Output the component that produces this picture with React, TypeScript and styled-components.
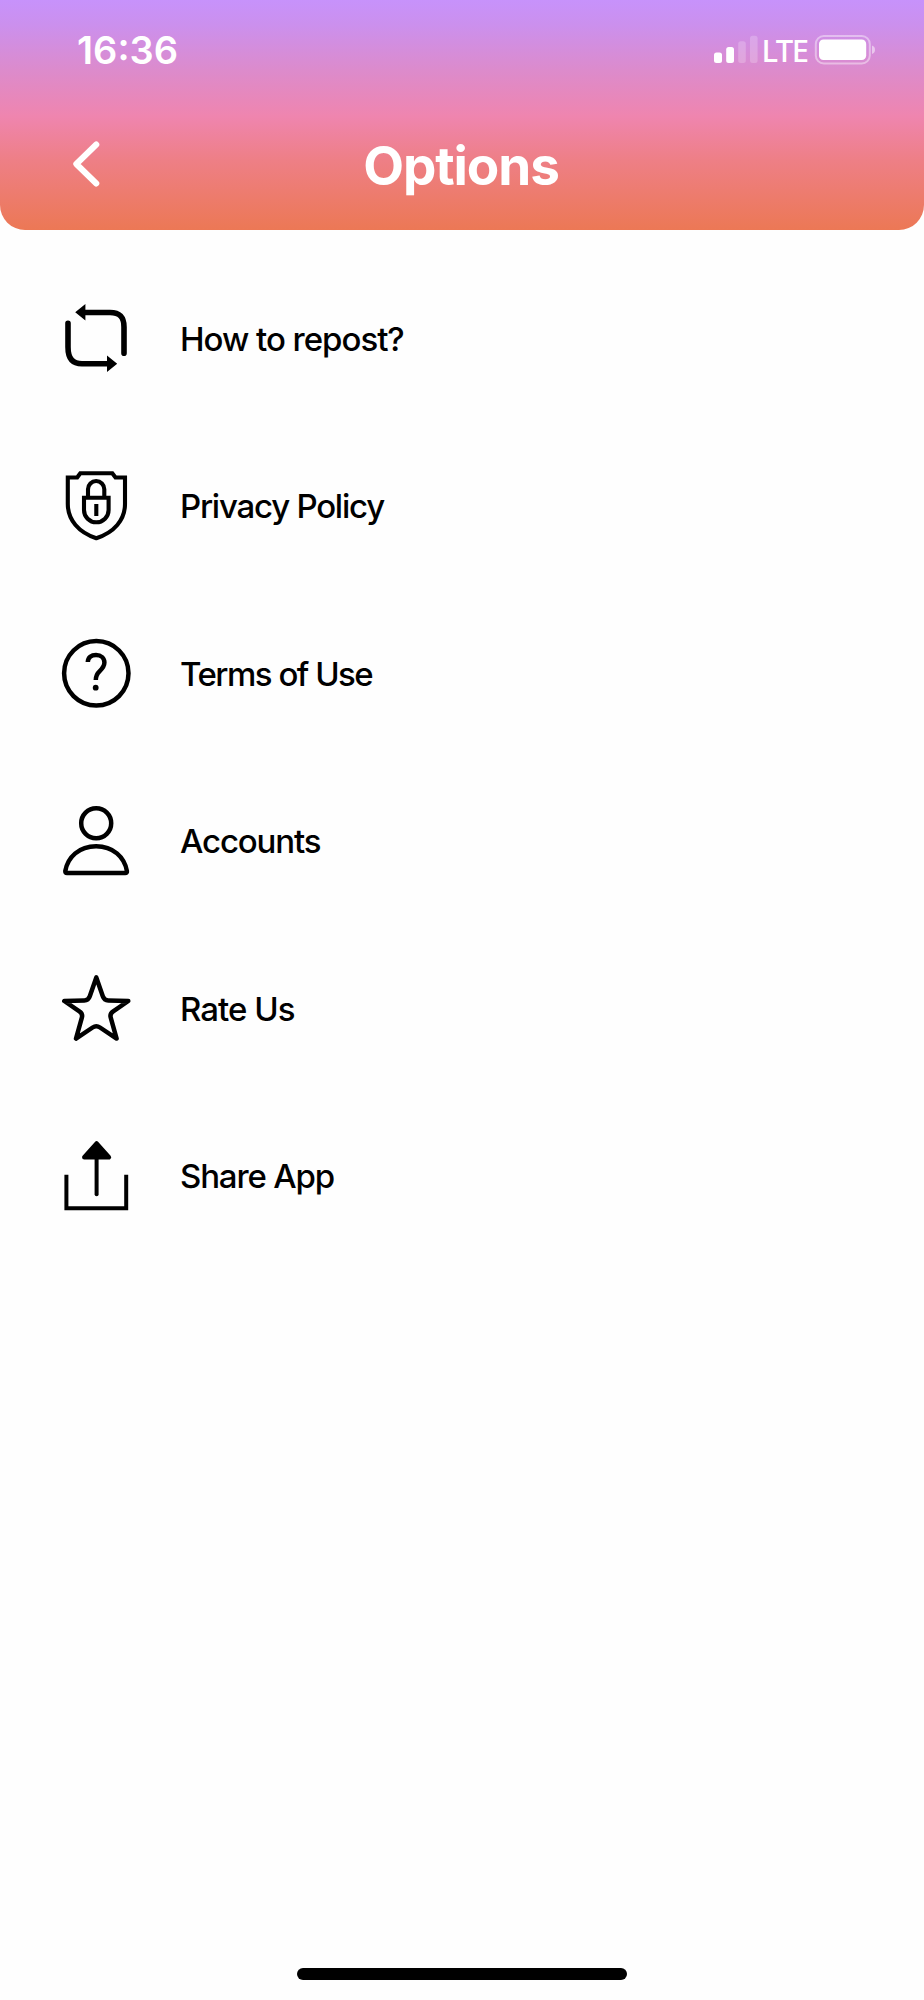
import React from 'react';
import styled, { createGlobalStyle } from 'styled-components';

const GlobalStyle = createGlobalStyle`
  * { box-sizing: border-box; }
  body { margin: 0; background: #fefefe; }
`;

const Screen = styled.main`
  display: flex;
  flex-direction: column;
  width: 924px;
  height: 2000px;
  background: #fefefe;
  color: #000;
  font-family: Inter, 'Liberation Sans', sans-serif;
`;

const Header = styled.header`
  display: flex;
  flex-direction: column;
  height: 230px;
  flex: none;
  color: #fff;
  border-radius: 0 0 25px 25px;
  background: linear-gradient(180deg, #c792fb 0, #cb90ee 24px, #dc8bcc 70px, #ef85af 116px, #ee7f86 160px, #ec7855 230px);
`;

const StatusBar = styled.div`
  display: flex;
  align-items: center;
  justify-content: space-between;
  height: 100px;
  padding: 0 49px 0 77px;
`;

const Clock = styled.time`
  font-size: 38px;
  font-weight: 600;
  line-height: 46px;
  letter-spacing: 0;
`;

const StatusIcons = styled.div`
  display: flex;
  align-items: center;
  height: 30px;

  svg { flex: none; }
`;

const Network = styled.span`
  flex: none;
  width: 55px;
  padding-left: 2.5px;
  font-family: 'Noto Sans', sans-serif;
  font-size: 31px;
  font-weight: 500;
  line-height: 36px;
  letter-spacing: -1.6px;
  white-space: nowrap;
`;

const TitleBar = styled.div`
  display: grid;
  grid-template-columns: 170px 1fr 170px;
  align-items: center;
  height: 130px;
  padding-bottom: 2px;
`;

const BackButton = styled.button`
  display: flex;
  width: 40px;
  height: 56px;
  margin-left: 66px;
  padding: 0;
  border: 0;
  background: none;
  color: inherit;
`;

const Title = styled.h1`
  margin: 0;
  padding: 3px 2px 0 0;
  text-align: center;
  font-size: 53px;
  font-weight: 700;
  line-height: 64px;
  letter-spacing: -1.1px;
`;

const Menu = styled.ul`
  display: flex;
  flex-direction: column;
  flex: 1;
  margin: 0;
  padding: 25px 0 0;
  list-style: none;
`;

const MenuItem = styled.li`
  display: flex;
  align-items: center;
  gap: 48px;
  height: 167.5px;
  padding-left: 60px;
`;

const Icon = styled.svg`
  display: block;
  flex: none;
  width: 72px;
  height: 72px;
  fill: none;
  stroke: currentColor;
  stroke-width: 4.5;
`;

const Label = styled.span<{ $tracking: number }>`
  padding-top: 0.4px;
  font-size: 33px;
  font-weight: 500;
  line-height: 40px;
  letter-spacing: ${(p) => p.$tracking}px;
  white-space: nowrap;
`;

const HomeIndicator = styled.div`
  flex: none;
  width: 330px;
  height: 12px;
  margin: 0 auto 20px;
  border-radius: 6px;
  background: #000;
`;

const RepostIcon = () => (
  <Icon viewBox="0 0 72 72">
    <g strokeWidth="5.6" strokeLinecap="round">
      <path d="M24 9.5H50C60 9.5 64 14 64 24V50.2" />
      <path d="M8 20.2V44C8 56 13 60.8 22 60.8H48" />
    </g>
    <path d="M15.2 9.3 25.4 1V17.4ZM57.2 60.8 47 52.6V69Z" fill="currentColor" stroke="none" />
  </Icon>
);

const ShieldIcon = () => (
  <Icon viewBox="0 0 72 72">
    <g strokeWidth="4.1">
      <path d="M7.8 7.5H17.2L20.3 3.2H52.3L55.5 7.5H65V34C65 50 54 62.5 36.3 68.2C18.8 62.5 7.8 50 7.8 34Z" />
      <path d="M24 27.7H48.6V40A12.3 12.3 0 0 1 24 40Z" />
      <path d="M28 27.7V19.2A8.15 8.15 0 0 1 44.3 19.2V27.7" />
      <path d="M36.3 34V46" />
    </g>
  </Icon>
);

const QuestionIcon = () => (
  <Icon viewBox="0 0 72 72">
    <circle cx="36.3" cy="35.3" r="32.2" />
    <path d="M27.8 24C28 19.5 31.3 17 36 17C41 17 44.4 20 44.4 24.6C44.4 28.8 42 31 39.5 33.3C37 35.6 35.8 37.4 35.8 42" />
    <circle cx="35.7" cy="49.7" r="2.9" fill="currentColor" stroke="none" />
  </Icon>
);

const PersonIcon = () => (
  <Icon viewBox="0 0 72 72">
    <circle cx="36.2" cy="18.2" r="15" />
    <path d="M7 68H65.2Q67.2 68 66.9 66C64.5 52 53 41.2 36.1 41.2S7.7 52 5.3 66Q5 68 7 68Z" />
  </Icon>
);

const StarIcon = () => (
  <Icon viewBox="0 0 72 72" strokeLinejoin="round">
    <path d="M36.3 4.4L42.8 23.3Q44.2 27.4 48.2 27.4L68.3 28L53.2 38.3Q49.5 40.8 50.8 44.8L56.6 65.6L40 54.5Q36.3 52 32.6 54.5L16 65.6L21.8 44.8Q23.1 40.8 19.4 38.3L4.3 28L24.4 27.4Q28.4 27.4 29.8 23.3Z" />
  </Icon>
);

const ShareIcon = () => (
  <Icon viewBox="0 0 72 72">
    <g strokeWidth="4">
      <path d="M6.4 36.8V68.2H66.2V36.8" strokeLinecap="square" />
      <path d="M36.6 16V54.2" strokeLinecap="round" />
    </g>
    <path d="M36.6 3.4 48.9 17.2H24.3Z" fill="currentColor" strokeLinejoin="round" />
  </Icon>
);

const items = [
  { label: 'How to repost?', tracking: -1.02, Glyph: RepostIcon },
  { label: 'Privacy Policy', tracking: -1.24, Glyph: ShieldIcon },
  { label: 'Terms of Use', tracking: -1.5, Glyph: QuestionIcon },
  { label: 'Accounts', tracking: -1.15, Glyph: PersonIcon },
  { label: 'Rate Us', tracking: -0.95, Glyph: StarIcon },
  { label: 'Share App', tracking: -1.15, Glyph: ShareIcon },
];

export default function App() {
  return (
    <Screen>
      <GlobalStyle />
      <Header>
        <StatusBar>
          <Clock>16:36</Clock>
          <StatusIcons>
            <svg width="45" height="30" viewBox="0 0 45 30" fill="#fff">
              <rect x="0" y="17.5" width="8" height="10.5" rx="2.5" />
              <rect x="12.2" y="12" width="7.8" height="16" rx="2.5" />
              <rect x="24.2" y="6.3" width="7.6" height="21.7" rx="2.5" opacity="0.22" />
              <rect x="36" y="0.8" width="7.6" height="27.2" rx="2.5" opacity="0.22" />
            </svg>
            <Network>LTE</Network>
            <svg width="61" height="30" viewBox="0 0 61 30" fill="#fff">
              <rect x="1.8" y="1" width="54" height="27.5" rx="8" fill="none" stroke="#fff" strokeOpacity="0.42" strokeWidth="2" />
              <rect x="5" y="4.5" width="47.2" height="20.5" rx="4.5" />
              <path d="M58 10.5Q61 11.5 61 14.8T58 19Z" opacity="0.5" />
            </svg>
          </StatusIcons>
        </StatusBar>
        <TitleBar>
          <BackButton aria-label="Back">
            <svg width="40" height="56" viewBox="0 0 40 56" fill="none" stroke="currentColor" strokeWidth="6" strokeLinecap="round" strokeLinejoin="round">
              <path d="M30.3 8.5 10.3 28 30.3 47.5" />
            </svg>
          </BackButton>
          <Title>Options</Title>
        </TitleBar>
      </Header>
      <Menu>
        {items.map(({ label, tracking, Glyph }) => (
          <MenuItem key={label}>
            <Glyph />
            <Label $tracking={tracking}>{label}</Label>
          </MenuItem>
        ))}
      </Menu>
      <HomeIndicator />
    </Screen>
  );
}
